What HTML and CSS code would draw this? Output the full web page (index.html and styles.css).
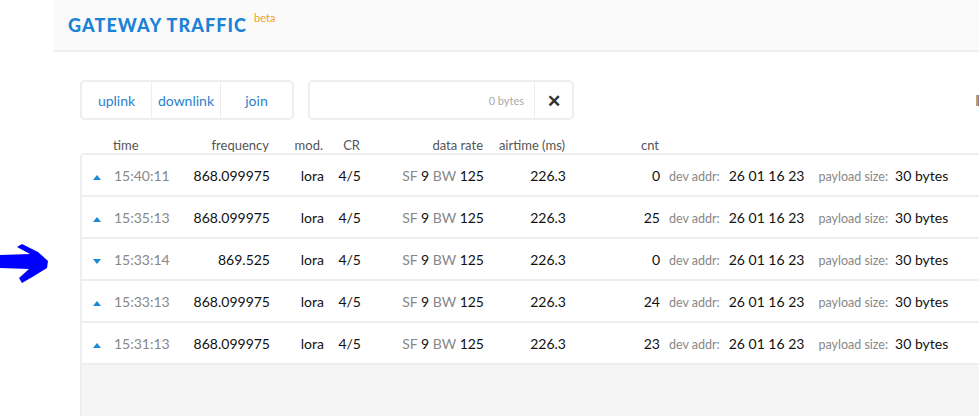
FILE: index.html
```html
<!DOCTYPE html>
<html lang="en">
<head>
    <meta charset="UTF-8">
    <title>Gateway Traffic</title>
    <link rel="stylesheet" href="styles.css">
</head>
<body>
<div class="page">
    <div class="side"></div>
    <div class="content">
        <div class="head-bar">
            <span class="title">GATEWAY TRAFFIC</span><sup class="beta">beta</sup>
        </div>
        <div class="main">
            <div class="toolbar">
                <div class="seg">
                    <div class="seg-btn seg-up">uplink</div>
                    <div class="seg-btn seg-down">downlink</div>
                    <div class="seg-btn seg-join">join</div>
                </div>
                <div class="filter">
                    <div class="filter-size">0 bytes</div>
                    <div class="filter-clear">&#x2715;</div>
                </div>
                <div class="mark"></div>
            </div>
            <div class="cols">
                <div class="c-icon"></div>
                <div class="c-time">time</div>
                <div class="c-freq">frequency</div>
                <div class="c-mod">mod.</div>
                <div class="c-cr">CR</div>
                <div class="c-rate">data rate</div>
                <div class="c-air">airtime (ms)</div>
                <div class="c-cnt">cnt</div>
            </div>
            <div class="list">
                <div class="row">
                    <div class="c-icon"><span class="tri up"></span></div>
                    <div class="c-time">15:40:11</div>
                    <div class="c-freq">868.099975</div>
                    <div class="c-mod">lora</div>
                    <div class="c-cr">4/5</div>
                    <div class="c-rate"><span class="lbl">SF</span> 9 <span class="lbl">BW</span> 125</div>
                    <div class="c-air">226.3</div>
                    <div class="c-cnt">0</div>
                    <div class="c-info"><span class="key">dev addr:</span><span class="addr">26 01 16 23</span><span class="key key-size">payload size:</span><span>30 bytes</span></div>
                </div>
                <div class="row">
                    <div class="c-icon"><span class="tri up"></span></div>
                    <div class="c-time">15:35:13</div>
                    <div class="c-freq">868.099975</div>
                    <div class="c-mod">lora</div>
                    <div class="c-cr">4/5</div>
                    <div class="c-rate"><span class="lbl">SF</span> 9 <span class="lbl">BW</span> 125</div>
                    <div class="c-air">226.3</div>
                    <div class="c-cnt">25</div>
                    <div class="c-info"><span class="key">dev addr:</span><span class="addr">26 01 16 23</span><span class="key key-size">payload size:</span><span>30 bytes</span></div>
                </div>
                <div class="row">
                    <div class="c-icon"><span class="tri down"></span></div>
                    <div class="c-time">15:33:14</div>
                    <div class="c-freq">869.525</div>
                    <div class="c-mod">lora</div>
                    <div class="c-cr">4/5</div>
                    <div class="c-rate"><span class="lbl">SF</span> 9 <span class="lbl">BW</span> 125</div>
                    <div class="c-air">226.3</div>
                    <div class="c-cnt">0</div>
                    <div class="c-info"><span class="key">dev addr:</span><span class="addr">26 01 16 23</span><span class="key key-size">payload size:</span><span>30 bytes</span></div>
                </div>
                <div class="row">
                    <div class="c-icon"><span class="tri up"></span></div>
                    <div class="c-time">15:33:13</div>
                    <div class="c-freq">868.099975</div>
                    <div class="c-mod">lora</div>
                    <div class="c-cr">4/5</div>
                    <div class="c-rate"><span class="lbl">SF</span> 9 <span class="lbl">BW</span> 125</div>
                    <div class="c-air">226.3</div>
                    <div class="c-cnt">24</div>
                    <div class="c-info"><span class="key">dev addr:</span><span class="addr">26 01 16 23</span><span class="key key-size">payload size:</span><span>30 bytes</span></div>
                </div>
                <div class="row">
                    <div class="c-icon"><span class="tri up"></span></div>
                    <div class="c-time">15:31:13</div>
                    <div class="c-freq">868.099975</div>
                    <div class="c-mod">lora</div>
                    <div class="c-cr">4/5</div>
                    <div class="c-rate"><span class="lbl">SF</span> 9 <span class="lbl">BW</span> 125</div>
                    <div class="c-air">226.3</div>
                    <div class="c-cnt">23</div>
                    <div class="c-info"><span class="key">dev addr:</span><span class="addr">26 01 16 23</span><span class="key key-size">payload size:</span><span>30 bytes</span></div>
                </div>
            </div>
        </div>
    </div>
</div>
<!-- hand drawn pointer over the downlink row -->
<svg class="pointer" width="52" height="42" viewBox="0 0 52 42">
    <path d="M0 11 L30 10 L17 3 L22 0 L38 8 L48 17 L47 24 L34 32 L22 39 L19 34 L29 25 L0 24 Z" fill="#0000ff"/>
</svg>
</body>
</html>
```

FILE: styles.css
```css
html, body{
    margin: 0;
    height: 100%;
    overflow: hidden;
}
body{
    background: #fff;
    font-family: Lato, "Open Sans", sans-serif;
    font-size: 14px;
    color: #111;
}
.page{
    display: flex;
    height: 100%;
}
.side{
    width: 54px;
    flex: none;
}
.content{
    flex: 1;
    display: flex;
    flex-direction: column;
}
.head-bar{
    height: 50px;
    background: #fafafa;
    border-bottom: 2px solid #eee;
    box-sizing: content-box;
    padding-left: 14px;
    display: flex;
    align-items: center;
}
.title{
    font-weight: 900;
    font-size: 18px;
    letter-spacing: 1.1px;
    color: #1c82d6;
}
.beta{
    font-size: 11px;
    color: #f0a12c;
    margin-left: 7px;
    align-self: flex-start;
    margin-top: 11px;
}
.main{
    flex: 1;
    display: flex;
    flex-direction: column;
    padding: 28px 0 0 26px;
}
.toolbar{
    display: flex;
    align-items: flex-start;
    height: 40px;
}
.seg{
    display: flex;
    border: 2px solid #eee;
    border-radius: 5px;
    height: 36px;
}
.seg-btn{
    display: flex;
    align-items: center;
    justify-content: center;
    color: #2b7fce;
    font-size: 14px;
}
.seg-btn + .seg-btn{
    border-left: 1px solid #eee;
}
.seg-up{ width: 69px; }
.seg-down{ width: 68px; }
.seg-join{ width: 71px; }
.filter{
    margin-left: 14px;
    width: 262px;
    height: 36px;
    border: 2px solid #eee;
    border-radius: 5px;
    display: flex;
}
.filter-size{
    flex: 1;
    display: flex;
    align-items: center;
    justify-content: flex-end;
    padding-right: 10px;
    font-size: 11px;
    color: #aaa;
    border-right: 1px solid #eee;
}
.filter-clear{
    width: 37px;
    display: flex;
    align-items: center;
    justify-content: center;
    font-size: 17px;
    font-weight: bold;
    color: #333;
}
.mark{
    margin-left: auto;
    margin-top: 15px;
    width: 3px;
    height: 11px;
    background: linear-gradient(to right, #c89a6a 50%, #7d7f98 50%);
}
.cols{
    display: flex;
    height: 33px;
    align-items: flex-end;
    color: #555;
    font-size: 13px;
    line-height: 16px;
    box-sizing: border-box;
    padding-left: 1px;
}
.list{
    flex: 1;
    border-left: 2px solid #eee;
    border-top: 2px solid #eee;
    border-top-left-radius: 4px;
    background: #f5f5f5;
}
.row{
    display: flex;
    align-items: center;
    padding-top: 1px;
    box-sizing: content-box;
    height: 39px;
    background: #fff;
    border-bottom: 2px solid #eee;
    white-space: nowrap;
}
.c-icon{ width: 32px; flex: none; padding-left: 11px; box-sizing: border-box; }
.c-time{ width: 66px; flex: none; }
.row .c-time{ color: #888; }
.c-freq{ width: 90px; flex: none; text-align: right; }
.c-mod{ width: 54px; flex: none; text-align: right; }
.c-cr{ width: 37px; flex: none; text-align: right; }
.c-rate{ width: 123px; flex: none; text-align: right; }
.c-air{ width: 82px; flex: none; text-align: right; }
.c-cnt{ width: 94px; flex: none; text-align: right; }
.c-info{ padding-left: 9px; }
.lbl{ color: #888; }
.key{
    color: #888;
    font-size: 12.5px;
    margin-right: 9px;
}
.key-size{ margin-right: 7px; }
.addr{ margin-right: 14px; }
.tri{
    display: inline-block;
    width: 0;
    height: 0;
    border-left: 4.5px solid transparent;
    border-right: 4.5px solid transparent;
    vertical-align: middle;
}
.tri.up{ border-bottom: 5px solid #1a8ad6; }
.tri.down{ border-top: 5px solid #1a8ad6; }
.pointer{
    position: absolute;
    left: 0;
    top: 244px;
}
```
